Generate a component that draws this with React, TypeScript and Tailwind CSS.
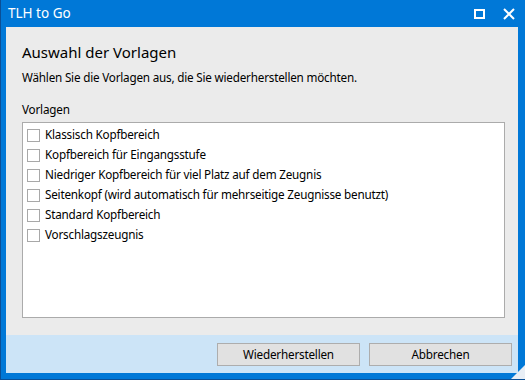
import React from "react";

const items = [
  "Klassisch Kopfbereich",
  "Kopfbereich für Eingangsstufe",
  "Niedriger Kopfbereich für viel Platz auf dem Zeugnis",
  "Seitenkopf (wird automatisch für mehrseitige Zeugnisse benutzt)",
  "Standard Kopfbereich",
  "Vorschlagszeugnis",
];

export default function App() {
  return (
    <div
      className="w-[525px] h-[380px] bg-[#0078d7] flex flex-col border-l border-b border-[#0a4f96] text-[#000] relative"
      style={{ fontFamily: '"Noto Sans", "Open Sans", sans-serif' }}
    >
      <div className="h-[27px] flex items-center pl-[7px] shrink-0">
        <span className="text-white text-[13.5px] flex-1">TLH to Go</span>
        <div className="flex items-center h-full">
          <div className="w-[28px] h-full flex items-center justify-center">
            <div className="w-[11px] h-[10px] border-2 border-white" />
          </div>
          <div className="w-[32px] h-full flex items-center justify-center">
            <svg width="12" height="12" viewBox="0 0 12 12">
              <path d="M1 1 L11 11 M11 1 L1 11" stroke="white" strokeWidth="2" />
            </svg>
          </div>
        </div>
      </div>
      <div className="flex-1 flex flex-col ml-[5px] mr-[7px] mb-[6px]">
        <div className="flex-1 bg-[#ebebeb] flex flex-col pl-[16px] pr-[13px] pt-[15px] pb-[17px] text-[11.7px] tracking-[-0.2px]">
          <div className="text-[15px] leading-[20px] tracking-normal">Auswahl der Vorlagen</div>
          <div className="leading-[16px] mt-[7px]">
            Wählen Sie die Vorlagen aus, die Sie wiederherstellen möchten.
          </div>
          <div className="leading-[16px] mt-[16px]">Vorlagen</div>
          <div className="flex-1 mt-[5px] bg-white border border-[#ababab] pt-[2px] pl-[4px]">
            {items.map((t) => (
              <div key={t} className="h-[20px] flex items-center gap-[5px]">
                <div className="w-[13px] h-[13px] border border-[#a8a8a8] bg-white shrink-0" />
                <span>{t}</span>
              </div>
            ))}
          </div>
        </div>
        <div className="h-[38px] bg-[#cce4f7] flex items-start justify-end gap-[9px] pt-[8px] pr-[6px]">
          <button className="w-[143px] h-[23px] bg-[#e1e1e1] border border-[#adadad] text-[11.7px] tracking-[-0.2px]">
            Wiederherstellen
          </button>
          <button className="w-[143px] h-[23px] bg-[#e1e1e1] border border-[#adadad] text-[11.7px] tracking-[-0.2px]">
            Abbrechen
          </button>
        </div>
      </div>
      <svg className="absolute right-0 bottom-0" width="14" height="14" viewBox="0 0 14 14">
        <path d="M14 0 L14 14 L0 14 Z" fill="#e8eef5" />
      </svg>
    </div>
  );
}
